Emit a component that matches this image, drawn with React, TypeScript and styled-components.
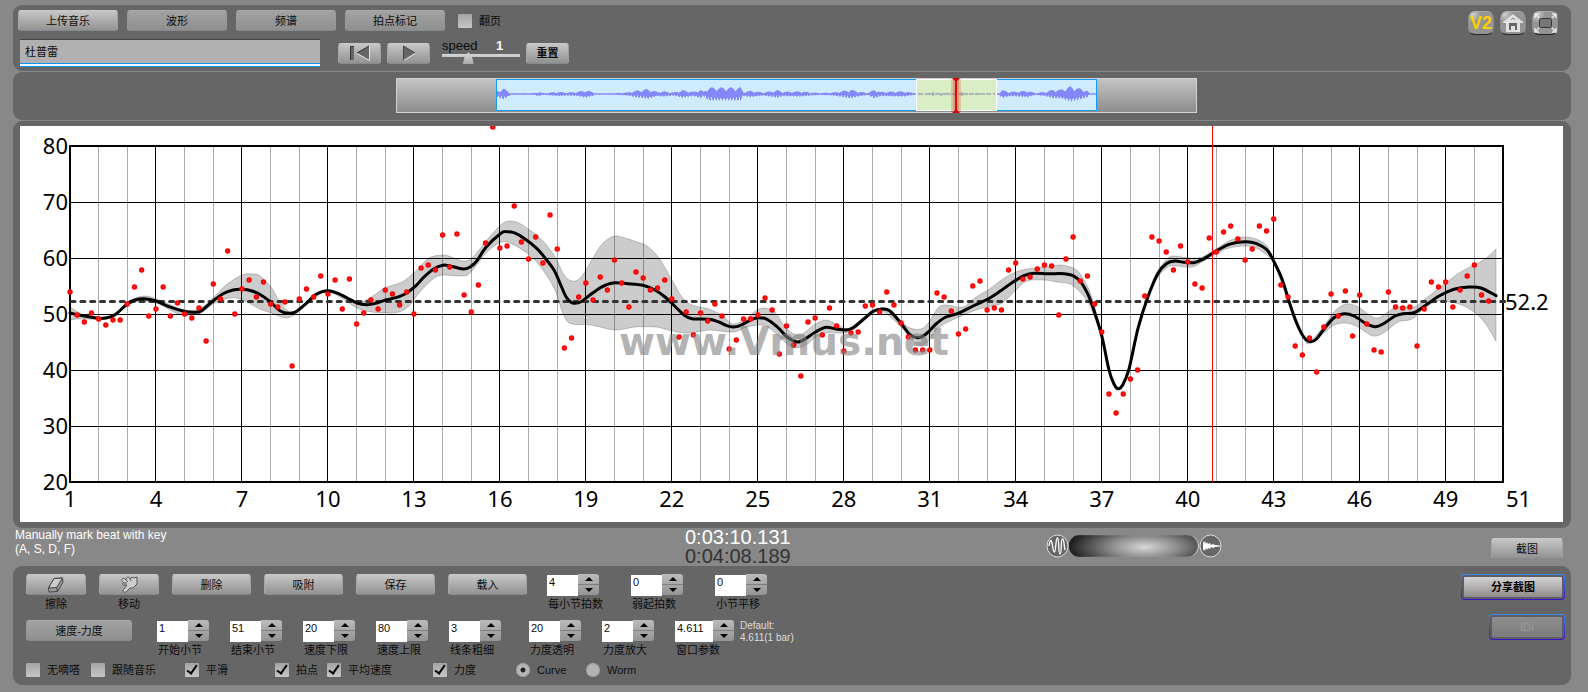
import React from "react";
import styled, { createGlobalStyle, css } from "styled-components";

const GlobalStyle = createGlobalStyle`
  *, *::before, *::after { box-sizing: border-box; }
  body {
    margin: 0;
    background: #888;
    color: #0c0c0c;
    font-family: "Liberation Sans", "Noto Sans CJK SC", sans-serif;
    font-size: 11px;
    line-height: 14px;
  }
  button, input { font: inherit; color: inherit; margin: 0; }
`;

/* ---------- layout ---------- */

const Shell = styled.main`
  padding: 5px 17px 7px 13px;
`;

const Panel = styled.section`
  background: #666;
  border-radius: 9px;
`;

const Toolbar = styled(Panel)`
  display: flex;
  justify-content: space-between;
  height: 66px;
  padding: 5px 13px 0 5px;
`;

const ToolbarRow = styled.div`
  display: flex;
  align-items: center;
  height: 21px;
`;

const SecondRow = styled(ToolbarRow)`
  height: 28px;
  margin: 8px 0 0 2px;
`;

const TabList = styled.div`
  display: flex;
  gap: 9px;
  margin-right: 13px;
`;

const StripPanel = styled(Panel)`
  display: grid;
  grid-template-columns: 383fr 801fr 374fr;
  align-items: start;
  min-height: 48px;
  margin-top: 1px;
  padding: 6px 0;
`;

const ChartPanel = styled(Panel)`
  margin-top: 1px;
  padding: 5px 8px 6px 7px;
`;

const StatusRow = styled.div`
  display: grid;
  grid-template-columns: 672fr 361fr 445fr auto;
  height: 38px;
  padding: 0 8px 0 0;
`;

const ControlPanel = styled(Panel)`
  display: flex;
  justify-content: space-between;
  min-height: 119px;
  padding: 8px 6px 8px 13px;
`;

const ControlRow = styled.div<{ $height: number; $gap: number }>`
  display: flex;
  align-items: flex-start;
  gap: ${(p) => p.$gap}px;
  height: ${(p) => p.$height}px;
`;

const OptionRow = styled.div`
  display: grid;
  grid-template-columns: 65px 94px 90px 52px 106px 83px 70px auto;
  height: 14px;
`;

const ShareColumn = styled.div`
  display: flex;
  flex-direction: column;
  align-items: flex-end;
  gap: 14px;
`;

/* ---------- controls ---------- */

const bevel = css`
  border: 1px solid;
  border-color: #c9c9c9 #a0a0a0 #858b8e #a6a6a6;
  background: linear-gradient(#c6c6c6, #929292);
`;

const Button = styled.button<{ $width: number; $flat?: boolean; $bold?: boolean }>`
  ${bevel}
  display: flex;
  align-items: center;
  justify-content: center;
  flex: none;
  width: ${(p) => p.$width}px;
  height: 21px;
  padding: 0;
  border-radius: 3px;
  font-weight: ${(p) => (p.$bold ? 700 : 400)};
  ${(p) =>
    p.$flat &&
    css`
      border-color: #aaa #989898 #858b8e #989898;
      background: linear-gradient(#a2a2a2, #8f8f8f);
    `}
`;

const CaptionedButton = styled.div`
  display: flex;
  flex-direction: column;
  align-items: center;
  gap: 2px;
`;

const GlowFrame = styled.div<{ $dim?: boolean }>`
  border-radius: 4px;
  padding: 1px;
  background: linear-gradient(#3c8cf0, #3a10c8);
  ${Button} {
    height: 24px;
    border: 2px solid #5c5c66;
    background: ${(p) =>
      p.$dim ? "linear-gradient(#8e8e8e, #7c7c7c)" : "linear-gradient(#d4d4d4, #8f8b8b)"};
    color: ${(p) => (p.$dim ? "#999" : "#000")};
  }
`;

const TitleInput = styled.input`
  width: 300px;
  height: 28px;
  margin-right: 18px;
  padding: 0 5px 4px;
  border: 0;
  border-top: 1px solid #444;
  border-bottom: 1px solid #0e96f4;
  border-radius: 0;
  outline: 0;
  background: linear-gradient(#b1b1b1 0 23px, #0e96f4 23px 24px, #f4faff 24px);
`;

const PlayButtons = styled.div`
  display: flex;
  gap: 6px;
  margin-right: 12px;
`;

const SpeedBox = styled.div`
  display: grid;
  grid-template-columns: 54px 24px;
  grid-template-rows: 13px 12px;
  width: 78px;
  height: 28px;
  margin-right: 6px;
  font-size: 13px;
  line-height: 13px;
`;

const SpeedValue = styled.output`
  color: #fff;
  font-weight: 700;
`;

const SpeedRange = styled.input`
  appearance: none;
  grid-column: 1 / -1;
  width: 100%;
  height: 12px;
  background: linear-gradient(#d8d8d8, #c4c4c4) 0 2px / 100% 3px no-repeat;
  &::-webkit-slider-thumb {
    appearance: none;
    width: 11px;
    height: 12px;
    background: linear-gradient(#ddd, #aaa);
    clip-path: polygon(50% 0, 85% 45%, 100% 100%, 0 100%, 15% 45%);
  }
`;

const CheckLabel = styled.label`
  display: flex;
  align-items: center;
  gap: 7px;
  height: 14px;
  white-space: nowrap;
`;

const Tick = styled.input`
  appearance: none;
  position: relative;
  flex: none;
  width: 14px;
  height: 14px;
  border-radius: 1px;
  background: linear-gradient(#a4a4a4, #c6c6c6);
  &:checked::after {
    content: "";
    position: absolute;
    left: 4px;
    top: 0;
    width: 6px;
    height: 11px;
    border: solid #000;
    border-width: 0 2px 2px 0;
    transform: rotate(35deg);
  }
`;

const Dot = styled.input`
  appearance: none;
  flex: none;
  width: 14px;
  height: 14px;
  border-radius: 50%;
  background: radial-gradient(circle, #b4b4b4 40%, #9c9c9c);
  &:checked {
    background: radial-gradient(circle, #222 0 2px, #bdbdbd 3px, #999);
  }
`;

const StepperBox = styled.div`
  display: flex;
  flex-direction: column;
  gap: 2px;
`;

const StepperGroup = styled.div<{ $before: number; $pitch: number }>`
  display: flex;
  margin-left: ${(p) => p.$before}px;
  ${StepperBox}:not(:last-child) {
    width: ${(p) => p.$pitch}px;
  }
`;

const StepperLine = styled.div`
  display: flex;
  height: 21px;
`;

const StepperInput = styled.input<{ $wide?: boolean }>`
  width: ${(p) => (p.$wide ? 38 : 31)}px;
  height: 21px;
  margin-top: 1px;
  padding: 0 2px 7px;
  border: 0;
  border-radius: 0;
  background: #fff;
`;

const StepperButtons = styled.div`
  display: grid;
  width: 21px;
  border-radius: 0 3px 3px 0;
  overflow: hidden;
`;

const StepButton = styled.button`
  display: flex;
  align-items: center;
  justify-content: center;
  padding: 0;
  border: 0;
  background: linear-gradient(#bbb, #a8a8a8);
  & + & {
    border-top: 1px solid #808080;
    background: linear-gradient(#a6a6a6, #949494);
  }
`;

const StepperLabel = styled.label`
  padding-left: 1px;
  white-space: nowrap;
`;

const HelpText = styled.p`
  margin: 0;
  padding-left: 2px;
  color: #fff;
  font-size: 12px;
  line-height: 14px;
  white-space: pre-line;
`;

const Times = styled.div`
  font-size: 20px;
  line-height: 19px;
  color: #333;
`;

const CurrentTime = styled.div`
  color: #fff;
`;

const Volume = styled.div`
  display: flex;
  align-items: center;
  height: 36px;
`;

const VolumeRange = styled.input`
  appearance: none;
  width: 130px;
  height: 22px;
  border-radius: 11px;
  background: radial-gradient(ellipse 76px 24px at 58% 55%, #d8d8d8, #8a8a8a 45%, #1c1c1c);
  box-shadow: inset 1px 0 0 #222, inset -1px 0 1px #ddd;
  &::-webkit-slider-thumb {
    appearance: none;
    width: 1px;
    height: 1px;
    background: transparent;
  }
`;

const SnapSlot = styled.div`
  padding-top: 10px;
`;

const DefaultNote = styled.p`
  margin: 0;
  color: #ddd;
  font-size: 10px;
  line-height: 12px;
  white-space: pre-line;
`;

const IconBar = styled.div`
  display: flex;
  gap: 6px;
  padding-top: 1px;
`;

const IconButton = styled.button`
  display: flex;
  align-items: center;
  justify-content: center;
  width: 26px;
  height: 24px;
  padding: 0;
  border: 1px solid;
  border-color: #aaa #888 #222 #8c8c8c;
  border-radius: 7px;
  background: radial-gradient(circle at 15% 10%, #d0d0d0, #949494 30%);
`;

const VersionText = styled.span`
  color: #ffd000;
  font-size: 18px;
  font-weight: 700;
`;

const Drawing = styled.svg`
  display: block;
  width: 100%;
  height: auto;
`;

/* ---------- data ---------- */

const PLOT = { left: 50, right: 1483, top: 20, bottom: 356 };
const BEAT = 7.165;

// Vertical plot position of each marked beat, four beats to a bar.
const beats = [
  166, 189, 196, 187, 193, 199, 194, 194, 178, 161, 144, 190, 183, 161, 190, 177, 188, 192, 182, 215,
  158, 173, 125, 188, 163, 154, 171, 156, 178, 181, 176, 240, 173, 163, 171, 150, 168, 154, 183, 153,
  198, 187, 174, 183, 164, 168, 179, 166, 188, 142, 139, 144, 109, 141, 108, 169, 186, 159, 117, 1,
  122, 120, 80, 116, 133, 111, 137, 89, 123, 222, 212, 171, 157, 174, 151, 164, 134, 157, 181, 146,
  152, 164, 162, 154, 173, 211, 186, 209, 187, 195, 178, 190, 223, 214, 193, 193, 189, 172, 184, 228,
  200, 219, 250, 196, 192, 209, 182, 200, 225, 207, 206, 180, 179, 186, 166, 179, 197, 211, 224, 224,
  224, 167, 171, 185, 208, 203, 160, 155, 184, 182, 184, 144, 137, 153, 151, 143, 139, 140, 189, 133,
  111, 155, 150, 178, 206, 268, 287, 268, 253, 244, 170, 111, 115, 126, 144, 120, 136, 158, 162, 112,
  126, 106, 100, 113, 134, 123, 100, 105, 93, 159, 171, 220, 229, 212, 246, 201, 168, 190, 165, 210,
  169, 198, 224, 226, 166, 181, 182, 181, 220, 183, 156, 161, 156, 181, 164, 150, 139, 169, 175,
];

type Point = [number, number];

const tempoCurve: Point[] = [
  [50, 187], [64, 190], [79, 192.3], [86, 192], [95, 188.7], [107, 178.3], [115, 174], [124, 172.7],
  [136, 175], [149, 180.7], [164, 185.3], [174, 186.3], [181, 185], [193, 175], [203, 167.7],
  [213, 164], [222, 163.3], [232, 165], [242, 169.7], [251, 176.3], [260, 184.7], [269, 187.3],
  [276, 185.7], [286, 177.7], [296, 168.3], [308, 164.7], [320, 168.3], [337, 177], [347, 178.7],
  [357, 177], [365, 174.3], [379, 170.7], [387, 166.7], [396, 159.7], [404, 151], [414, 142.7],
  [423, 139.3], [429, 139.7], [443, 143], [450, 141], [457, 134.7], [466, 121.3], [481, 107.3],
  [487, 105.7], [494, 106.7], [504, 112.3], [517, 122.7], [525, 132], [534, 144], [541, 159.7],
  [546, 170.7], [551, 176.3], [555, 177.3], [561, 175.7], [569, 169.7], [581, 161.3], [593, 157],
  [608, 157.7], [623, 159.3], [635, 164], [645, 171], [656, 181.3], [664, 189], [672, 192.7],
  [689, 193.3], [699, 196], [706, 199.3], [713, 201], [720, 199.7], [730, 194.3], [738, 191.7],
  [747, 193.3], [757, 200.7], [767, 211], [776, 215.7], [782, 214.7], [796, 205.7], [806, 201.3],
  [816, 203], [826, 204], [833, 201.7], [845, 192], [853, 185.3], [862, 183], [870, 185],
  [881, 197.3], [890, 208.7], [898, 211.7], [906, 208], [916, 198], [926, 191], [939, 187],
  [953, 180], [968, 173], [980, 165.3], [992, 156.7], [1004, 149.7], [1014, 147.3], [1028, 147.7],
  [1044, 147.7], [1053, 149.7], [1061, 156.3], [1069, 170.7], [1076, 190.7], [1082, 210.7],
  [1089, 244], [1094, 258], [1098, 262.7], [1102.5, 259.3], [1109, 243], [1118, 202.3],
  [1128, 170.7], [1138, 147.3], [1147, 137.3], [1155, 135], [1164, 136.3], [1174, 136.7],
  [1182, 133.7], [1196, 125.3], [1209, 118.3], [1225, 115.7], [1236, 117.3], [1247, 124],
  [1254, 135.7], [1262, 153], [1270, 178.3], [1277, 198], [1284, 211.3], [1290.5, 215.7],
  [1296.5, 213], [1304, 203], [1314, 191.7], [1324, 187.7], [1334, 190], [1346, 197.7],
  [1355, 200.7], [1363, 198], [1375, 190], [1383, 187.7], [1394, 186.7], [1405, 179.7],
  [1419, 170], [1434, 163.3], [1449, 161], [1461, 162], [1476, 169.7],
];

const bandTop: Point[] = [
  [50, 181], [64, 189], [81, 191], [95, 188], [107, 176], [124, 170], [139, 174], [164, 184],
  [179, 183], [193, 172], [206, 159], [222, 149], [232, 148], [240, 150], [251, 161], [260, 176],
  [271, 186], [286, 177], [308, 164], [337, 175], [348, 173], [365, 162], [382, 156], [396, 145],
  [409, 132], [423, 129], [429, 130], [443, 135], [453, 131], [467, 114], [482, 98], [490, 95],
  [499, 97], [508, 103], [520, 112], [534, 129], [544, 149], [552, 155], [559, 153], [566, 144],
  [579, 122], [588, 113], [596, 110], [605, 112], [617, 116], [627, 120], [639, 132], [652, 154],
  [662, 171], [672, 179], [689, 183], [703, 190], [713, 198], [727, 192], [737, 184], [745, 182],
  [755, 186], [765, 201], [776, 209], [784, 207], [794, 199], [806, 194], [818, 199], [830, 202],
  [848, 188], [860, 182], [870, 184], [881, 195], [890, 202], [901, 203], [909, 196], [918, 182],
  [926, 179], [943, 181], [956, 171], [968, 164], [983, 153], [996, 146], [1007, 143], [1024, 141],
  [1040, 139], [1053, 142], [1061, 149], [1071, 169], [1082, 209], [1089, 243], [1098, 262],
  [1109, 242], [1118, 201], [1128, 169], [1138, 145], [1148, 132], [1155, 130], [1169, 132],
  [1182, 131], [1196, 123], [1209, 115], [1223, 111], [1236, 113], [1247, 120], [1254, 134],
  [1270, 177], [1284, 210], [1290, 215], [1304, 200], [1314, 186], [1326, 178], [1338, 181],
  [1355, 192], [1365, 188], [1377, 181], [1394, 181], [1405, 173], [1426, 157], [1439, 147],
  [1454, 139], [1465, 133], [1476, 123],
];

const bandBottom: Point[] = [
  [50, 194], [58, 193], [79, 193], [95, 190], [107, 179], [124, 175], [139, 178], [156, 187],
  [169, 189], [181, 187], [193, 178], [206, 173], [216, 172], [227, 176], [240, 183], [254, 188],
  [265, 192], [274, 189], [286, 179], [308, 166], [337, 182], [352, 186], [365, 187], [379, 186],
  [389, 180], [399, 167], [413, 153], [423, 149], [440, 150], [450, 147], [467, 126], [482, 116],
  [494, 119], [508, 128], [520, 140], [534, 162], [544, 190], [552, 198], [571, 199], [595, 204],
  [615, 201], [635, 201], [645, 203], [657, 206], [672, 207], [689, 204], [713, 206], [727, 201],
  [742, 199], [752, 204], [767, 218], [776, 222], [786, 219], [796, 211], [806, 207], [825, 207],
  [836, 202], [848, 191], [862, 185], [881, 201], [894, 216], [902, 220], [911, 212], [919, 201],
  [939, 191], [956, 184], [968, 181], [982, 177], [996, 164], [1007, 155], [1024, 154],
  [1037, 156], [1050, 158], [1061, 167], [1071, 182], [1082, 214], [1089, 245], [1098, 263],
  [1109, 244], [1118, 204], [1128, 173], [1138, 151], [1148, 141], [1155, 140], [1172, 141],
  [1182, 136], [1196, 128], [1209, 122], [1225, 120], [1236, 122], [1248, 130], [1254, 137],
  [1270, 180], [1284, 213], [1290, 217], [1304, 207], [1314, 199], [1326, 197], [1338, 201],
  [1353, 210], [1365, 206], [1378, 196], [1392, 193], [1405, 182], [1419, 175], [1439, 178],
  [1454, 186], [1465, 197], [1476, 215],
];

// Loudness envelope of the recording: [x, half height].
const envelope: Point[] = [
  [101, 3], [107, 5], [111, 3], [114, 0.8], [137, 0.8], [142, 2], [147, 0.8], [161, 2], [171, 1.5],
  [181, 2], [189, 3.5], [196, 2], [199, 0.6], [214, 0.6], [231, 1.5], [239, 3], [251, 4.5],
  [261, 2], [267, 2.5], [277, 1.5], [286, 3.5], [297, 2], [304, 4], [307, 2], [312, 6], [327, 6],
  [344, 6], [347, 2], [354, 3], [367, 1.5], [381, 3.5], [387, 2], [404, 2.5], [414, 1.5],
  [424, 1], [437, 1.5], [454, 4], [464, 2], [471, 1], [478, 4], [484, 2], [507, 2.5], [517, 1],
  [527, 1.5], [537, 1.5], [547, 2], [561, 1.5], [581, 1], [599, 0.6], [602, 1], [606, 3.5],
  [614, 2], [631, 3], [639, 1], [649, 2], [656, 4], [664, 4], [674, 7], [684, 5], [691, 3],
  [693, 0.6], [700, 0.6],
];

function spline(points: Point[]): string {
  const at = (i: number) => points[Math.max(0, Math.min(points.length - 1, i))];
  let d = "";
  for (let i = 0; i < points.length - 1; i++) {
    const [a, b, c, e] = [at(i - 1), at(i), at(i + 1), at(i + 2)];
    d += `C${b[0] + (c[0] - a[0]) / 6} ${b[1] + (c[1] - a[1]) / 6} ${c[0] - (e[0] - b[0]) / 6} ${
      c[1] - (e[1] - b[1]) / 6
    } ${c[0]} ${c[1]}`;
  }
  return d;
}

const curvePath = `M${tempoCurve[0].join(" ")}${spline(tempoCurve)}`;
const lowerReversed = [...bandBottom].reverse() as Point[];
const bandPath = `M${bandTop[0].join(" ")}${spline(bandTop)}L${lowerReversed[0].join(" ")}${spline(
  lowerReversed
)}Z`;

function wavePath(): string {
  let d = "";
  for (let i = 0; i < envelope.length - 1; i++) {
    const [x0, h0] = envelope[i];
    const [x1, h1] = envelope[i + 1];
    for (let x = x0; x < x1; x++) {
      const h = h0 + ((h1 - h0) * (x - x0)) / (x1 - x0);
      const up = Math.max(0.7, h * (0.45 + 0.65 * Math.abs(Math.sin(x * 12.9))));
      const down = Math.max(0.7, h * (0.45 + 0.65 * Math.abs(Math.sin(x * 7.3))));
      d += `M${x + 0.5} ${16 - up}V${16 + down}`;
    }
  }
  return d;
}

/* ---------- drawings ---------- */

function OverviewStrip() {
  return (
    <Drawing viewBox="0 0 801 35" role="img" aria-label="Recording overview">
      <defs>
        <linearGradient id="stripGrey" x2="0" y2="1">
          <stop offset="0" stopColor="#c4c4c4" />
          <stop offset="1" stopColor="#8c8c8c" />
        </linearGradient>
      </defs>
      <rect x="0.5" y="0.5" width="800" height="34" fill="url(#stripGrey)" stroke="#d2d2d2" />
      <rect x="100.5" y="1.5" width="600" height="31" fill="#cfecff" stroke="#149bf2" />
      <path d={wavePath()} stroke="#8487fa" fill="none" />
      <rect x="520.5" y="1.5" width="80" height="31" fill="#dcefbb" fillOpacity="0.85" stroke="#fff" />
      <path d="M522 16H599" stroke="#8b93a8" strokeDasharray="5 2 9 1" />
      <path d="M537 14V18M545 15V18M566 14V18M580 15V17" stroke="#8b93a8" />
      <rect x="555" y="1" width="10" height="33" fill="#d84a28" fillOpacity="0.25" />
      <rect x="557" y="1" width="6" height="33" fill="#d84a28" fillOpacity="0.3" />
      <path d="M560 1V34" stroke="#e00a0a" strokeWidth="2" />
      <path d="M556 0H564L561 3H559ZM556 35H564L561 32H559Z" fill="#d00" />
    </Drawing>
  );
}

function TempoChart() {
  const barX = (bar: number) => PLOT.left + (bar - 1) * BEAT * 4;
  const bars = Array.from({ length: 49 }, (_, i) => i + 2);
  const labels = Array.from({ length: 17 }, (_, i) => 1 + i * 3);
  return (
    <Drawing
      viewBox="0 0 1543 396"
      role="img"
      aria-label="Tempo chart"
      fontFamily='"Noto Sans", sans-serif'
      fontSize="22"
      fill="#000"
    >
      <rect width="1543" height="396" fill="#fff" />
      {bars.map((bar) => {
        const major = bar % 3 === 1;
        const x = Math.floor(barX(bar)) + 0.5;
        return (
          <path
            key={bar}
            d={`M${x} ${PLOT.top}V${PLOT.bottom}`}
            stroke={major ? "#000" : "#aaa"}
          />
        );
      })}
      {[76.5, 132.5, 188.5, 244.5, 300.5].map((y) => (
        <path key={y} d={`M${PLOT.left} ${y}H${PLOT.right}`} stroke="#000" />
      ))}
      <path d={bandPath} fill="#000" fillOpacity="0.2" stroke="#000" strokeOpacity="0.2" />
      <rect
        x={PLOT.left}
        y={PLOT.top}
        width={PLOT.right - PLOT.left}
        height={PLOT.bottom - PLOT.top}
        fill="none"
        stroke="#000"
        strokeWidth="2"
      />
      <path
        d={`M${PLOT.left + 1} 175.5H${PLOT.right + 2}`}
        stroke="#333"
        strokeWidth="3"
        strokeDasharray="4 5.860"
        strokeLinecap="round"
      />
      <path d={curvePath} fill="none" stroke="#000" strokeWidth="3" strokeLinecap="round" />
      {beats.map((y, i) => (
        <circle
          key={i}
          cx={PLOT.left + i * BEAT}
          cy={y}
          r="1.7"
          fill="#f55"
          stroke="#f00"
          strokeWidth="2"
        />
      ))}
      <path d="M1192.5 0V356" stroke="#f00" />
      {[80, 70, 60, 50, 40, 30, 20].map((v, i) => (
        <text key={v} x="48" y={28 + i * 56} textAnchor="end">
          {v}
        </text>
      ))}
      {labels.map((n) => (
        <text key={n} x={barX(n)} y="381" textAnchor="middle">
          {n}
        </text>
      ))}
      <text x="1486" y="381">
        51
      </text>
      <text x="1485" y="184">
        52.2
      </text>
      <text
        x="599"
        y="229"
        fill="#808080"
        fillOpacity="0.6"
        fontFamily='"DejaVu Sans", sans-serif'
        fontWeight="700"
        fontSize="39"
      >
        www.Vmus.net
      </text>
    </Drawing>
  );
}

/* ---------- parts ---------- */

function Check({ children, checked }: { children: React.ReactNode; checked?: boolean }) {
  return (
    <CheckLabel>
      <Tick type="checkbox" defaultChecked={checked} />
      {children}
    </CheckLabel>
  );
}

function Stepper({ id, label, value, wide }: { id: string; label: string; value: string; wide?: boolean }) {
  return (
    <StepperBox>
      <StepperLine>
        <StepperInput id={id} defaultValue={value} inputMode="decimal" $wide={wide} />
        <StepperButtons>
          <StepButton type="button" aria-label={`${label} +`}>
            <svg width="8" height="4">
              <path d="M0 4L4 0L8 4Z" />
            </svg>
          </StepButton>
          <StepButton type="button" aria-label={`${label} -`}>
            <svg width="8" height="4">
              <path d="M0 0L4 4L8 0Z" />
            </svg>
          </StepButton>
        </StepperButtons>
      </StepperLine>
      <StepperLabel htmlFor={id}>{label}</StepperLabel>
    </StepperBox>
  );
}

export default function App() {
  return (
    <>
      <GlobalStyle />
      <Shell>
        <Toolbar>
          <div>
            <ToolbarRow>
              <TabList>
                <Button $width={100}>上传音乐</Button>
                <Button $width={100} $flat>波形</Button>
                <Button $width={100} $flat>频谱</Button>
                <Button $width={100} $flat>拍点标记</Button>
              </TabList>
              <Check>翻页</Check>
            </ToolbarRow>
            <SecondRow>
              <TitleInput defaultValue="杜普雷" aria-label="Title" />
              <PlayButtons>
                <Button $width={43} aria-label="Rewind">
                  <svg width="22" height="17" fill="#666">
                    <path d="M1 1H5V15H1ZM20 1V15L8 8Z" />
                    <path d="M1.5 15V1.5H5M20 1L8 8" fill="none" stroke="#333" />
                    <path d="M20.500 1V15.500L8 8.500" fill="none" stroke="#e0e0e0" />
                  </svg>
                </Button>
                <Button $width={43} aria-label="Play">
                  <svg width="14" height="17" fill="#666">
                    <path d="M1 1V15L13 8Z" />
                    <path d="M1.500 15.500V1L13 8" fill="none" stroke="#444" />
                    <path d="M2 15.500L13 8.500" fill="none" stroke="#e0e0e0" />
                  </svg>
                </Button>
              </PlayButtons>
              <SpeedBox>
                <label htmlFor="speed">speed</label>
                <SpeedValue>1</SpeedValue>
                <SpeedRange id="speed" type="range" min={0} max={100} defaultValue={31} />
              </SpeedBox>
              <Button $width={43} $bold>重置</Button>
            </SecondRow>
          </div>
          <IconBar>
            <IconButton aria-label="Version 2">
              <VersionText>V2</VersionText>
            </IconButton>
            <IconButton aria-label="Home">
              <svg width="22" height="20">
                <path d="M11 1L1 9V10H4V19H18V10H21V9Z" fill="#e2e2e2" />
                <path d="M7 17V10H15V17H13V13H9V17Z" fill="#666" />
                <path d="M9 7L11 5L13 7" fill="none" stroke="#888" />
              </svg>
            </IconButton>
            <IconButton aria-label="Full screen">
              <svg width="23" height="20" fill="none">
                <rect x="5.5" y="5.5" width="12" height="9" rx="2" stroke="#333" fill="#777" />
                <path
                  d="M1 5V1H5M1 1L5 5M18 1H22V5M22 1L18 5M1 15V19H5M1 19L5 15M22 15V19H18M22 19L18 15"
                  stroke="#e6e6e6"
                  strokeWidth="1.5"
                />
              </svg>
            </IconButton>
          </IconBar>
        </Toolbar>

        <StripPanel>
          <span />
          <OverviewStrip />
        </StripPanel>

        <ChartPanel>
          <TempoChart />
        </ChartPanel>

        <StatusRow>
          <HelpText>{"Manually mark beat with key\n(A, S, D, F)"}</HelpText>
          <Times>
            <CurrentTime>0:03:10.131</CurrentTime>
            <div>0:04:08.189</div>
          </Times>
          <Volume>
            <svg width="23" height="24" fill="none">
              <ellipse cx="11.500" cy="12" rx="10.500" ry="11" fill="#666" stroke="#ddd" />
              <path
                d="M3 12C4 6 5 5 6 9S7 18 8.500 18S9.500 4 11.500 4S12 20 14 20S14.500 5 16.500 5S18 14 19 16"
                stroke="#fff"
                strokeWidth="1.300"
              />
            </svg>
            <VolumeRange type="range" aria-label="Volume" />
            <svg width="23" height="24" fill="none">
              <ellipse cx="11.500" cy="12" rx="10.500" ry="11" fill="#666" stroke="#ddd" />
              <path
                d="M4 7L5 9L6 7L7 10L8 8L9 10L11 9L12 11L14 10L16 11L21 11.500V12.500L16 13L14 14L12 13L11 15L9 14L8 16L7 14L6 17L5 15L4 17Z"
                fill="#fff"
              />
            </svg>
          </Volume>
          <SnapSlot>
            <Button $width={72}>截图</Button>
          </SnapSlot>
        </StatusRow>

        <ControlPanel>
          <div>
            <ControlRow $height={46} $gap={13}>
              <CaptionedButton>
                <Button $width={60} aria-labelledby="erase">
                  <svg width="18" height="16" fill="#999" stroke="#444">
                    <path d="M7 1.500L15.500 1L16 5L10.500 14.500L2 15L1.500 11Z" />
                    <path d="M1.500 11L9.500 10.500L15.500 1L7 1.500Z" fill="#ccc" />
                    <path d="M9.500 10.500L10.500 14.500" />
                  </svg>
                </Button>
                <span id="erase">擦除</span>
              </CaptionedButton>
              <CaptionedButton>
                <Button $width={60} aria-labelledby="move">
                  <svg width="18" height="17" fill="#ccc" stroke="#555">
                    <path d="M2 5C1 3 3 1 5 3L6 4C6 1 9 0 10 3C11 1 13 1 14 2L17 1V8L13 12L10 12L6 16C4 17 2 15 4 13L7 9L4 9C2 9 2 7 4 7L2 5Z" />
                    <path d="M5 3L8 6M10 3L11 5M4 7L7 7" fill="none" />
                  </svg>
                </Button>
                <span id="move">移动</span>
              </CaptionedButton>
              <Button $width={79}>删除</Button>
              <Button $width={79}>吸附</Button>
              <Button $width={79}>保存</Button>
              <Button $width={79}>载入</Button>
              <StepperGroup $before={7} $pitch={84}>
                <Stepper id="beatsPerBar" label="每小节拍数" value="4" />
                <Stepper id="pickup" label="弱起拍数" value="0" />
                <Stepper id="barShift" label="小节平移" value="0" />
              </StepperGroup>
            </ControlRow>
            <ControlRow $height={43} $gap={6}>
              <Button $width={106} $flat>速度-力度</Button>
              <StepperGroup $before={19} $pitch={73}>
                <Stepper id="startBar" label="开始小节" value="1" />
                <Stepper id="endBar" label="结束小节" value="51" />
                <Stepper id="tempoMin" label="速度下限" value="20" />
                <Stepper id="tempoMax" label="速度上限" value="80" />
                <Stepper id="lineWidth" label="线条粗细" value="3" />
              </StepperGroup>
              <StepperGroup $before={22} $pitch={73}>
                <Stepper id="opacity" label="力度透明" value="20" />
                <Stepper id="gain" label="力度放大" value="2" />
                <Stepper id="windowSize" label="窗口参数" value="4.611" wide />
              </StepperGroup>
              <DefaultNote>{"Default:\n4.611(1 bar)"}</DefaultNote>
            </ControlRow>
            <OptionRow>
              <Check>无嘀嗒</Check>
              <Check>跟随音乐</Check>
              <Check checked>平滑</Check>
              <Check checked>拍点</Check>
              <Check checked>平均速度</Check>
              <Check checked>力度</Check>
              <CheckLabel>
                <Dot type="radio" name="view" defaultChecked />
                Curve
              </CheckLabel>
              <CheckLabel>
                <Dot type="radio" name="view" />
                Worm
              </CheckLabel>
            </OptionRow>
          </div>
          <ShareColumn>
            <GlowFrame>
              <Button $width={102} $bold>分享截图</Button>
            </GlowFrame>
            <GlowFrame $dim>
              <Button $width={74} disabled>IDI</Button>
            </GlowFrame>
          </ShareColumn>
        </ControlPanel>
      </Shell>
    </>
  );
}
